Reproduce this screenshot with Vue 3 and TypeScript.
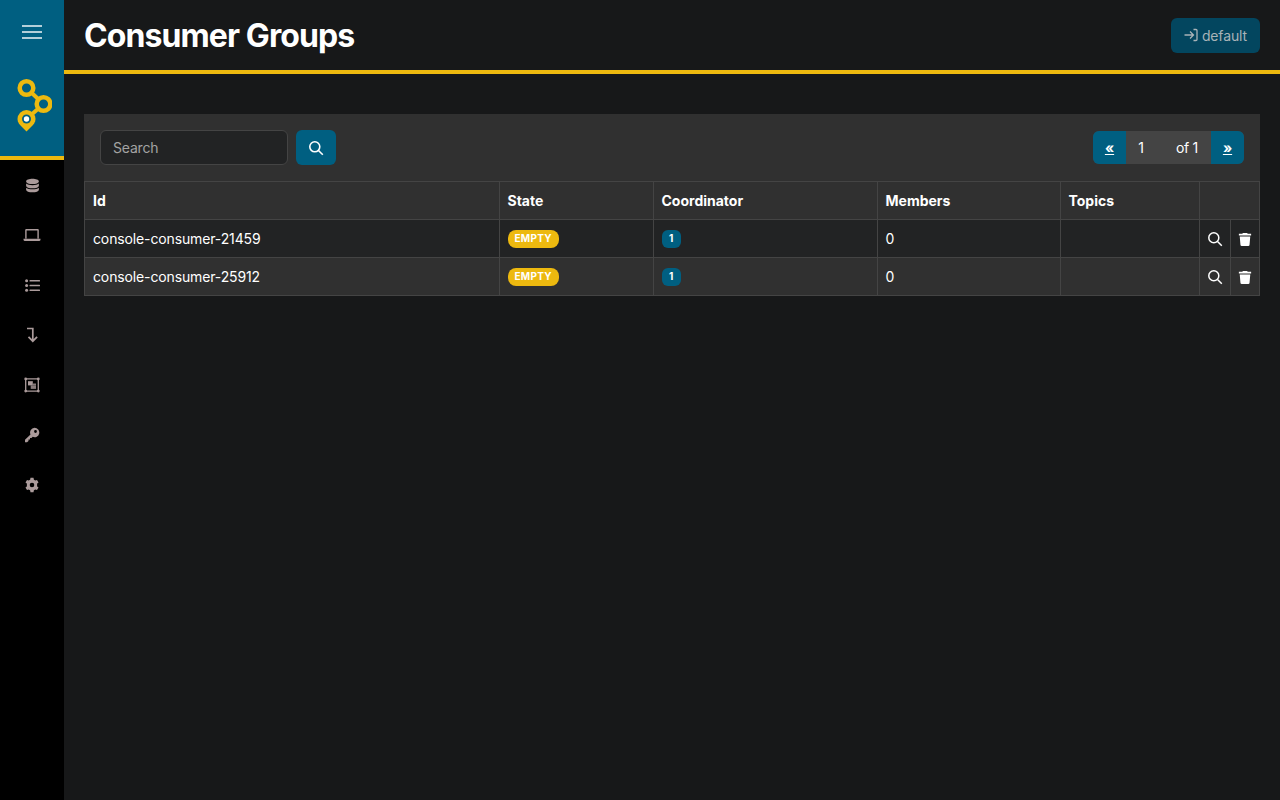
<script setup lang="ts">
interface Group { id: string; state: string; coordinator: number; members: number }
const groups: Group[] = [
  { id: 'console-consumer-21459', state: 'EMPTY', coordinator: 1, members: 0 },
  { id: 'console-consumer-25912', state: 'EMPTY', coordinator: 1, members: 0 },
]
const columns = ['Id', 'State', 'Coordinator', 'Members', 'Topics']
</script>

<template>
  <div class="app">
    <aside class="sidebar">
      <div class="brand">
        <button class="burger" aria-label="menu"><span></span><span></span><span></span></button>
        <svg class="logo" viewBox="0 0 36 54" width="36" height="54">
          <g fill="none" stroke="#edb90f" stroke-width="4">
            <line x1="10.500" y1="10" x2="27.500" y2="26" />
            <line x1="27.500" y1="26" x2="10.500" y2="41" />
          </g>
          <circle cx="10.500" cy="10" r="6.800" fill="#005f81" stroke="#edb90f" stroke-width="4.500" />
          <circle cx="27.500" cy="26" r="6.800" fill="#005f81" stroke="#edb90f" stroke-width="4.500" />
          <path d="M1.500 41a9 9 0 0 1 18 0c0 3.500-2 5.500-4 7.500l-5 5-5-5c-2-2-4-4-4-7.500z" fill="#edb90f" />
          <circle cx="10.500" cy="41" r="4.500" fill="#005f81" />
          <circle cx="10.500" cy="41" r="2.700" fill="#fff" />
        </svg>
      </div>
      <nav class="nav">
        <a class="nav-item"><svg viewBox="0 0 16 16" width="15" height="15" fill="currentColor"><path d="M8 .8c3.600 0 6.800 1 6.800 2.800S11.600 6.400 8 6.400 1.200 5.400 1.200 3.600 4.400.8 8 .8zM1.200 5.900C2.600 7.100 5.200 7.600 8 7.600s5.400-.5 6.800-1.700v2.300c0 1.700-3.200 2.800-6.800 2.800S1.200 9.900 1.200 8.200V5.900zM1.200 10.400c1.400 1.200 4 1.700 6.800 1.700s5.400-.5 6.800-1.700v2c0 1.800-3.200 2.800-6.800 2.800s-6.800-1-6.800-2.800v-2z" /></svg></a>
        <a class="nav-item"><svg viewBox="0 0 18 14" width="18" height="14" fill="currentColor"><path d="M3.200 1h11.600a1 1 0 0 1 1 1v8.500h-1.400V2.400H3.600v8.100H2.200V2a1 1 0 0 1 1-1zM.5 10.700h17v.8a1.500 1.500 0 0 1-1.500 1.500H2a1.500 1.500 0 0 1-1.500-1.500v-.8z" /></svg></a>
        <a class="nav-item"><svg viewBox="0 0 15 13" width="15" height="13" fill="currentColor"><circle cx="1.600" cy="1.700" r="1.500" /><circle cx="1.600" cy="6.500" r="1.500" /><circle cx="1.600" cy="11.300" r="1.500" /><rect x="4.500" y=".9" width="10.500" height="1.600" rx=".5" /><rect x="4.500" y="5.700" width="10.500" height="1.600" rx=".5" /><rect x="4.500" y="10.500" width="10.500" height="1.600" rx=".5" /></svg></a>
        <a class="nav-item"><svg viewBox="0 0 16 16" width="16" height="16" fill="none" stroke="currentColor" stroke-width="1.700"><path d="M3 1.500h5.800v12.700M4.500 9.800l4.300 4.400 4.300-4.400" /></svg></a>
        <a class="nav-item"><svg viewBox="0 0 16 16" width="16" height="16" fill="currentColor"><path d="M1.700 1.900h12.600v12.200H1.700z" fill="none" stroke="currentColor" stroke-width="1.300" /><circle cx="1.700" cy="1.900" r="1.400" /><circle cx="14.300" cy="1.900" r="1.400" /><circle cx="1.700" cy="14.100" r="1.400" /><circle cx="14.300" cy="14.100" r="1.400" /><rect x="4" y="4.200" width="4.800" height="4.200" /><rect x="6.700" y="8.400" width="5.300" height="3.500" opacity=".8" /><rect x="8.800" y="6.500" width="3.200" height="1.900" opacity=".8" /></svg></a>
        <a class="nav-item"><svg viewBox="0 0 16 16" width="16" height="16" fill="currentColor"><path d="M10.500.8a4.700 4.700 0 1 1-1.800 9L7.500 11H6v1.500H4.500V14L3 15.300H1v-2.500l5.500-5.400A4.700 4.700 0 0 1 10.500.8zm1 2.300a1.400 1.400 0 1 0 0 2.800 1.400 1.400 0 0 0 0-2.800z" /></svg></a>
        <a class="nav-item"><svg viewBox="0 0 16 16" width="16" height="16" fill="currentColor" fill-rule="evenodd"><path d="M6.500.8h3l.4 2c.4.200.8.400 1.200.7l1.900-.6L14.500 5.400l-1.500 1.300a5 5 0 0 1 0 2.600l1.500 1.300L13 13.100l-1.900-.6c-.4.300-.8.500-1.200.7l-.4 2h-3l-.4-2a5 5 0 0 1-1.200-.7l-1.900.6L1.500 10.600 3 9.300a5 5 0 0 1 0-2.600L1.500 5.400 3 2.900l1.900.6c.4-.3.800-.5 1.200-.7l.4-2zM8 5.700a2.300 2.300 0 1 0 0 4.600 2.300 2.300 0 0 0 0-4.600z" /></svg></a>
      </nav>
    </aside>

    <main class="main">
      <header class="topbar">
        <h1 class="title">Consumer Groups</h1>
        <button class="login">
          <svg viewBox="0 0 16 16" width="16" height="16" fill="none" stroke="currentColor" stroke-width="1.300"><path d="M1.500 8h8.500M7 4.500 10.500 8 7 11.500M10.500 2.500h2.500a1 1 0 0 1 1 1v9a1 1 0 0 1-1 1h-2.500" /></svg>
          <span>default</span>
        </button>
      </header>

      <section class="content">
        <div class="panel">
          <div class="toolbar">
            <div class="search">
              <input class="search-input" type="text" placeholder="Search" />
              <button class="search-btn" aria-label="search">
                <svg viewBox="0 0 16 16" width="16" height="16" fill="none" stroke="currentColor" stroke-width="1.600"><circle cx="6.800" cy="6.800" r="5" /><path d="m10.500 10.500 4.300 4.300" /></svg>
              </button>
            </div>
            <div class="pager">
              <a class="pager-btn">«</a>
              <span class="pager-page">1</span>
              <span class="pager-total">of 1</span>
              <a class="pager-btn">»</a>
            </div>
          </div>

          <table class="table">
            <colgroup>
              <col class="c-id" /><col class="c-state" /><col class="c-coord" /><col class="c-members" /><col class="c-topics" /><col class="c-act" /><col class="c-act2" />
            </colgroup>
            <thead>
              <tr>
                <th v-for="c in columns" :key="c">{{ c }}</th>
                <th colspan="2"></th>
              </tr>
            </thead>
            <tbody>
              <tr v-for="g in groups" :key="g.id">
                <td>{{ g.id }}</td>
                <td><span class="badge yellow">{{ g.state }}</span></td>
                <td><span class="badge blue">{{ g.coordinator }}</span></td>
                <td>{{ g.members }}</td>
                <td></td>
                <td class="action">
                  <svg viewBox="0 0 16 16" width="16" height="16" fill="none" stroke="#fff" stroke-width="1.500"><circle cx="6.800" cy="6.800" r="5" /><path d="m10.500 10.500 4.300 4.300" /></svg>
                </td>
                <td class="action">
                  <svg viewBox="0 0 16 16" width="14" height="16" fill="#fff"><path d="M5.500 1h5l.5 1h4v2H1V2h4l.5-1zM2 5h12l-.8 9.500a1.500 1.500 0 0 1-1.500 1.500H4.300a1.500 1.500 0 0 1-1.500-1.500L2 5z" /></svg>
                </td>
              </tr>
            </tbody>
          </table>
        </div>
      </section>
    </main>
  </div>
</template>

<style>
html, body { margin: 0; background: #171819; }
</style>

<style scoped>
.app {
  display: flex;
  min-height: 800px;
  background: #171819;
  color: #fff;
  font-family: Inter, "Liberation Sans", sans-serif;
  font-size: 14px;
}
.sidebar { width: 64px; flex: none; background: #000; }
.brand {
  height: 156px;
  background: #005f81;
  border-bottom: 4px solid #edb90f;
  display: flex;
  flex-direction: column;
  align-items: center;
}
.burger {
  margin-top: 25px;
  width: 20px;
  height: 14px;
  padding: 0;
  border: 0;
  background: none;
  display: flex;
  flex-direction: column;
  justify-content: space-between;
}
.burger span { display: block; height: 2px; background: #b3cfd9; }
.logo { margin-top: 39px; margin-left: 3px; }
.nav { display: flex; flex-direction: column; }
.nav-item {
  height: 50px;
  display: flex;
  align-items: center;
  justify-content: center;
  color: #ab9b9b;
}
.main { flex: 1; min-width: 0; }
.topbar {
  height: 70px;
  border-bottom: 4px solid #edb90f;
  display: flex;
  align-items: center;
  justify-content: space-between;
  padding: 0 20px;
}
.title {
  margin: 2px 0 0;
  font-size: 32px;
  font-weight: 700;
  line-height: 36px;
  letter-spacing: -0.9px;
  color: #fff;
}
.login {
  height: 35px;
  padding: 0 13px 0 12px;
  display: flex;
  align-items: center;
  gap: 3px;
  background: #03465f;
  color: #a9b3b8;
  border: 0;
  border-radius: 6px;
  font: inherit;
  letter-spacing: -0.13px;
}
.content { padding: 40px 20px 0; }
.panel { background: #303030; }
.toolbar {
  height: 67px;
  box-sizing: border-box;
  padding: 16px 16px 0;
  display: flex;
  justify-content: space-between;
  align-items: flex-start;
}
.search { display: flex; gap: 8px; }
.search-input {
  width: 188px;
  height: 35px;
  box-sizing: border-box;
  padding: 0 12px;
  background: #222324;
  border: 1px solid #444;
  border-radius: 6px;
  color: #fff;
  font: inherit;
  letter-spacing: -0.2px;
  outline: none;
}
.search-input::placeholder { color: #a3a3a3; opacity: 1; }
.search-btn {
  width: 40px;
  height: 35px;
  padding: 0;
  display: flex;
  align-items: center;
  justify-content: center;
  background: #005f81;
  color: #fff;
  border: 0;
  border-radius: 6px;
}
.pager {
  display: flex;
  height: 33px;
  margin-top: 1px;
  border-radius: 6px;
  overflow: hidden;
  line-height: 33px;
  background: #444;
}
.pager-btn {
  width: 33px;
  text-align: center;
  background: #005f81;
  text-decoration: underline;
  font-weight: 700;
  color: #fff;
}
.pager-page { width: 30px; text-align: center; }
.pager-total { width: 55px; box-sizing: border-box; padding-left: 20px; letter-spacing: -0.3px; }
.table {
  width: 1175px;
  border-collapse: collapse;
  table-layout: fixed;
}
.c-id { width: 414.500px; }
.c-state { width: 154px; }
.c-coord { width: 224px; }
.c-members { width: 183px; }
.c-topics { width: 139px; }
.c-act { width: 31px; }
.c-act2 { width: 29.500px; }
th, td {
  height: 38px;
  box-sizing: border-box;
  border: 1px solid #444;
  padding: 0 8px;
  text-align: left;
  vertical-align: middle;
}
th { font-weight: 700; }
td { letter-spacing: -0.13px; }
tbody tr:nth-child(odd) { background: #222324; }
tbody tr:nth-child(even) { background: #303030; }
.action { padding: 0; text-align: center; }
.action svg { display: block; margin: 0 auto; }
.badge {
  display: inline-block;
  font-size: 10px;
  font-weight: 700;
  line-height: 17.500px;
  padding: 0 7px;
  border-radius: 8px;
  vertical-align: middle;
  color: #fff;
}
.yellow { background: #edb90f; letter-spacing: .3px; }
.blue { background: #005f81; border-radius: 6px; padding: 0 7.500px; }
</style>
